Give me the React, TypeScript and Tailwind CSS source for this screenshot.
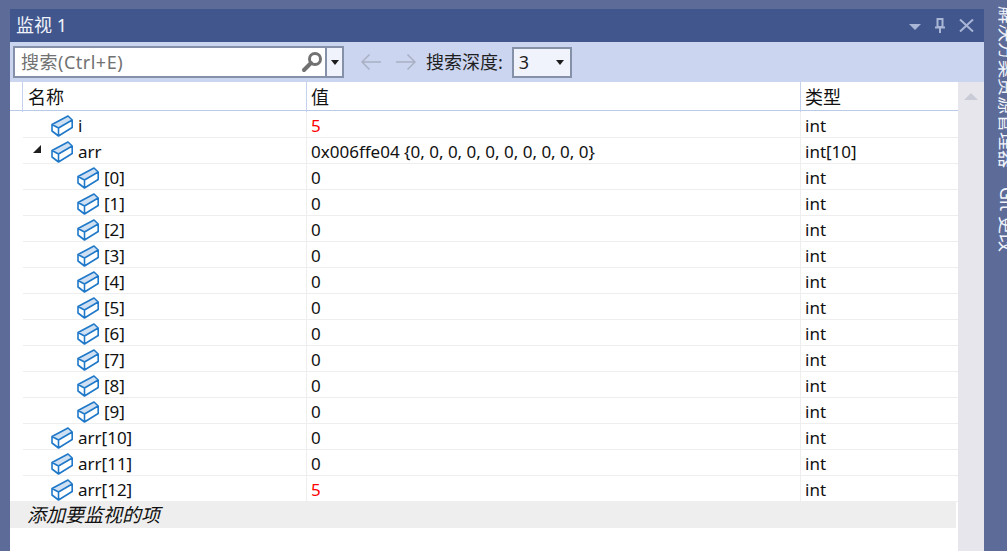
import { Fragment } from "react";

const font = `"Noto Sans", "Noto Sans CJK SC", sans-serif`;

interface Row {
  name: string;
  value: string;
  type: string;
  depth: number;
  changed?: boolean;
  expanded?: boolean;
}

const rows: Row[] = [
  { name: "i", value: "5", type: "int", depth: 0, changed: true },
  { name: "arr", value: "0x006ffe04 {0, 0, 0, 0, 0, 0, 0, 0, 0, 0}", type: "int[10]", depth: 0, expanded: true },
  ...Array.from({ length: 10 }, (_, i) => ({ name: `[${i}]`, value: "0", type: "int", depth: 1 })),
  { name: "arr[10]", value: "0", type: "int", depth: 0 },
  { name: "arr[11]", value: "0", type: "int", depth: 0 },
  { name: "arr[12]", value: "5", type: "int", depth: 0, changed: true },
];

function FieldIcon() {
  return (
    <svg width="22" height="22" viewBox="0 0 22 22" className="mt-[2px] shrink-0">
      <path d="M1 9.5 L17 1 L21.2 5 L21.2 12.5 L7.5 21 L1 16 Z" fill="#fff" />
      <path d="M1 9.5 L17 1 L21.2 5 L7.5 13 Z" fill="#cfe0f3" />
      <path d="M1 9.5 L17 1 L21.2 5 L21.2 12.5 L7.5 21 L1 16 Z M1 9.5 L7.5 13 L21.2 5 M7.5 13 L7.5 21" fill="none" stroke="#1f78c8" strokeWidth="1.6" strokeLinejoin="round" />
    </svg>
  );
}

export default function App() {
  return (
    <div className="flex h-[551px] w-[1007px] overflow-hidden bg-[#5d6b99] pl-[10px] pt-[9px]" style={{ fontFamily: font }}>
      <div className="flex h-[542px] w-[974px] shrink-0 flex-col bg-white">
        {/* Title */}
        <div className="flex h-[33px] shrink-0 items-center justify-between bg-[#40568d] pl-[6px] pr-[10px] text-[18px] text-[#f0f3fa]">
          <span>监视 1</span>
          <div className="flex items-center gap-[14px]">
            <svg width="12" height="6" viewBox="0 0 12 6" className="mt-[2px]"><path d="M0 0H12L6 6Z" fill="#a9b6d6" /></svg>
            <svg width="10" height="15" viewBox="0 0 10 15"><path d="M2.5 1H7.5V9H2.5ZM0 9.5H10M5 10V15" fill="none" stroke="#a9b6d6" strokeWidth="2" /></svg>
            <svg width="15" height="13" viewBox="0 0 15 13"><path d="M1 0.5L14 12.5M14 0.5L1 12.5" stroke="#a9b6d6" strokeWidth="2" /></svg>
          </div>
        </div>

        {/* Toolbar */}
        <div className="flex h-[40px] shrink-0 items-center bg-[#ccd5f0] pl-[3px] text-[18px] text-[#1e1e1e]">
          <div className="flex h-[32px] w-[314px] items-center justify-between border-[2px] border-[#8591a8] bg-white pl-[6px] pr-[2px] text-[#717171]">
            <span className="tracking-[0.5px]">搜索(Ctrl+E)</span>
            <svg width="22" height="22" viewBox="0 0 22 22"><circle cx="14" cy="8" r="5.5" fill="none" stroke="#717171" strokeWidth="3" /><path d="M10 12L3 19" stroke="#717171" strokeWidth="4" strokeLinecap="round" /></svg>
          </div>
          <div className="flex h-[32px] w-[17px] items-center justify-center border-y-[2px] border-r-[2px] border-[#8591a8] bg-[#f0f3fb]">
            <svg width="8" height="5" viewBox="0 0 8 5"><path d="M0 0H8L4 5Z" fill="#1e1e1e" /></svg>
          </div>
          <svg width="20" height="16" viewBox="0 0 20 16" className="ml-[17px]"><path d="M20 8H1M8.5 0.5L1 8L8.5 15.5" fill="none" stroke="#a8b0c4" strokeWidth="1.5" /></svg>
          <svg width="20" height="16" viewBox="0 0 20 16" className="ml-[15px]"><path d="M0 8H19M11.5 0.5L19 8L11.5 15.5" fill="none" stroke="#a8b0c4" strokeWidth="1.5" /></svg>
          <span className="ml-[10px]">搜索深度:</span>
          <div className="ml-[9px] flex h-[31px] w-[60px] items-center justify-between border-[2px] border-[#8591a8] bg-[#f0f3fb] pl-[5px] pr-[6px]">
            <span>3</span>
            <svg width="8" height="5" viewBox="0 0 8 5"><path d="M0 0H8L4 5Z" fill="#1e1e1e" /></svg>
          </div>
        </div>

        {/* Grid + scrollbar */}
        <div className="flex min-h-0 flex-1">
          <div className="w-[948px] shrink-0 text-[17px] text-[#111]">
            <div className="grid h-[29px] grid-cols-[12px_284px_494px_158px] border-b border-b-[#bccae9] text-[18px]">
              <div />
              <div className="border-l border-l-[#c5d1ec] pl-[5px] leading-[30px]">名称</div>
              <div className="border-l border-l-[#c5d1ec] pl-[4px] leading-[30px]">值</div>
              <div className="border-l border-l-[#c5d1ec] pl-[4px] leading-[30px]">类型</div>
            </div>
            <div className="grid grid-cols-[13px_283px_494px_158px] pt-px">
              {rows.map((r) => (
                <Fragment key={r.name}>
                  <div />
                  <div className="flex h-[26px] items-center border-b border-b-[#eeeeee]" style={{ paddingLeft: 16 + r.depth * 26 }}>
                    {r.expanded ? (
                      <svg width="8" height="8" viewBox="0 0 8 8" className="-ml-[6px] mb-[4px] mr-[10px]"><path d="M8 0V8H0Z" fill="#1e1e1e" /></svg>
                    ) : (
                      <span className="w-[12px]" />
                    )}
                    <FieldIcon />
                    <span className="ml-[5px] pt-[3px]">{r.name}</span>
                  </div>
                  <div className={`flex h-[26px] items-center border-b border-l border-b-[#eeeeee] border-l-[#eeeeee] pl-[4px] pt-[3px] ${r.changed ? "text-[#ff0000]" : ""}`}>{r.value}</div>
                  <div className="flex h-[26px] items-center border-b border-l border-b-[#eeeeee] border-l-[#eeeeee] pl-[4px] pt-[3px]">{r.type}</div>
                </Fragment>
              ))}
            </div>
            <div className="relative -mt-px flex h-[27px] w-[946px] items-center bg-[#eeeeee] pl-[17px] pt-[2px] text-[19px] italic">添加要监视的项</div>
          </div>
          <div className="flex w-[26px] shrink-0 justify-center bg-[#e6e6ec] pt-[11px]">
            <svg width="14" height="7" viewBox="0 0 14 7"><path d="M0 7L7 0L14 7Z" fill="#c9cbd6" /></svg>
          </div>
        </div>
      </div>

      {/* Docked tabs, cut by the window edge */}
      <div className="-mt-[3px] ml-[11px] flex h-[300px] w-[24px] shrink-0 flex-row gap-[19px] text-[18px] leading-[24px] text-[#f0f3fa] [text-orientation:sideways] [writing-mode:vertical-rl]">
        <span>解决方案资源管理器</span>
        <span>Git 更改</span>
      </div>
    </div>
  );
}
